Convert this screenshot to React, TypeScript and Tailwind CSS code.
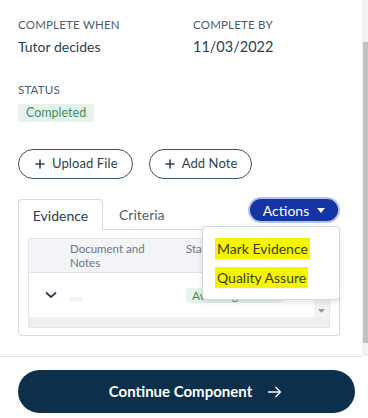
import React from "react";

function Plus() {
  return (
    <svg width="10" height="10" viewBox="0 0 10 10" className="shrink-0">
      <path d="M5 0.5v9M0.5 5h9" stroke="#2c4256" strokeWidth="1.6" fill="none" />
    </svg>
  );
}

export default function App() {
  return (
    <div
      className="relative w-[368px] h-[418px] overflow-hidden bg-white flex flex-col"
      style={{ fontFamily: "Lato, 'Noto Sans', sans-serif" }}
    >
      <div className="flex h-[356px]">
        <div className="w-[362px] pl-[18px] pr-[22px] pt-[17px]">
          <div className="flex">
            <div className="w-[175px]">
              <div className="text-[11.5px] leading-[16px] tracking-[0.2px] text-[#4b5d6e]">COMPLETE WHEN</div>
              <div className="mt-[4px] text-[14px] leading-[20px] text-[#2c3e50]">Tutor decides</div>
            </div>
            <div>
              <div className="text-[11.5px] leading-[16px] tracking-[0.2px] text-[#4b5d6e]">COMPLETE BY</div>
              <div className="mt-[4px] text-[14.5px] leading-[20px] text-[#2c3e50]">11/03/2022</div>
            </div>
          </div>
          <div className="mt-[25px] text-[11.5px] leading-[16px] tracking-[0.2px] text-[#4b5d6e]">STATUS</div>
          <div className="mt-[6px] flex">
            <span className="h-[18px] px-[8px] rounded-[3px] bg-[#e5f2ee] text-[#3f8f5c] text-[12.5px] leading-[18px]">
              Completed
            </span>
          </div>
          <div className="mt-[27px] flex gap-[16px]">
            <button className="h-[30px] pl-[16px] pr-[14px] rounded-full border-[1.5px] border-[#3a5468] flex items-center gap-[7px] text-[13px] tracking-[0.1px] text-[#2c4256]">
              <Plus />
              Upload File
            </button>
            <button className="h-[30px] pl-[15px] pr-[14px] rounded-full border-[1.5px] border-[#3a5468] flex items-center gap-[7px] text-[13px] tracking-[0.1px] text-[#2c4256]">
              <Plus />
              Add Note
            </button>
          </div>
          <div className="relative mt-[20px]">
            <div className="flex items-end h-[31px]">
              <div className="h-[31px] w-[85px] border border-b-0 border-[#d6dbe2] rounded-t-[4px] flex items-center justify-center text-[14px] text-[#2c3e50] bg-white">
                Evidence
              </div>
              <div className="flex-1 h-[31px] border-b border-[#d6dbe2] flex items-center pl-[16px] text-[14px] text-[#55606b]">
                Criteria
              </div>
            </div>
            <div className="h-[106px] border border-t-0 border-[#d6dbe2] rounded-b-[4px] px-[9px] pt-[8px]">
              <div className="h-[90px] border border-[#e3e6ec] flex flex-col">
                <div className="h-[34px] bg-[#f3f4f8] border-b border-[#dfe2e8] flex pt-[3px] text-[11.5px] leading-[14px] text-[#6b7480]">
                  <div className="w-[41px]" />
                  <div className="w-[116px]">Document and<br />Notes</div>
                  <div>Status</div>
                </div>
                <div className="flex-1 flex">
                  <div className="flex-1 flex items-center">
                    <div className="w-[41px] flex justify-center pl-[2px]">
                      <svg width="12" height="8" viewBox="0 0 12 8">
                        <path d="M1 1.5l5 4.5 5-4.5" stroke="#2c4256" strokeWidth="1.8" fill="none" />
                      </svg>
                    </div>
                    <div className="w-[116px]">
                      <span className="inline-block w-[12px] h-[4px] bg-[#f1f2f4]" />
                    </div>
                    <span className="h-[15px] px-[6px] rounded-[3px] bg-[#e5f2ee] text-[#3f8f5c] text-[12px] leading-[15px]">
                      Awaiting review
                    </span>
                  </div>
                  <div className="w-[15px] bg-[#f3f3f3] flex flex-col justify-end items-center pb-[4px]">
                    <svg width="7" height="4" viewBox="0 0 7 4">
                      <path d="M0 0h7L3.5 4z" fill="#9a9a9a" />
                    </svg>
                  </div>
                </div>
                <div className="h-[10px] bg-[#eef0f3]" />
              </div>
            </div>
            <div className="absolute right-0 top-[-2px] rounded-full p-[2px] bg-[#b3c1f0]">
              <button className="h-[22px] w-[88px] rounded-full bg-[#1434a4] text-white text-[14px] flex items-center justify-center gap-[8px]">
                Actions
                <svg width="8" height="5" viewBox="0 0 8 5">
                  <path d="M0 0h8L4 5z" fill="#fff" />
                </svg>
              </button>
            </div>
            <div className="absolute right-0 top-[27px] w-[138px] h-[74px] bg-white border border-[#d5d8dd] rounded-[4px] shadow-[0_2px_6px_rgba(0,0,0,0.12)] flex flex-col justify-center gap-[8px] pl-[12px]">
              <div className="flex">
                <span className="bg-[#f6f500] px-[2px] text-[14px] leading-[21px] text-[#3b3d1a]">Mark Evidence</span>
              </div>
              <div className="flex">
                <span className="bg-[#f6f500] px-[2px] text-[14px] leading-[21px] text-[#3b3d1a]">Quality Assure</span>
              </div>
            </div>
          </div>
        </div>
        <div className="w-[6px] flex flex-col bg-[#f1f1f1]">
          <div className="h-[42px]" />
          <div className="h-[301px] bg-[#c1c1c1] ml-[1px]" />
        </div>
      </div>
      <div className="h-px w-[362px] bg-[#dfe3ec]" />
      <div className="pt-[13px] pl-[18px]">
        <button className="w-[337px] h-[43px] pl-[18px] rounded-full bg-[#0c2f4b] text-white text-[15px] font-bold flex items-center justify-center gap-[16px]">
          <span>Continue Component</span>
          <svg width="14" height="12" viewBox="0 0 14 12">
            <path d="M0 6h12.5M7.5 1l5 5-5 5" stroke="#fff" strokeWidth="1.3" fill="none" />
          </svg>
        </button>
      </div>
    </div>
  );
}
